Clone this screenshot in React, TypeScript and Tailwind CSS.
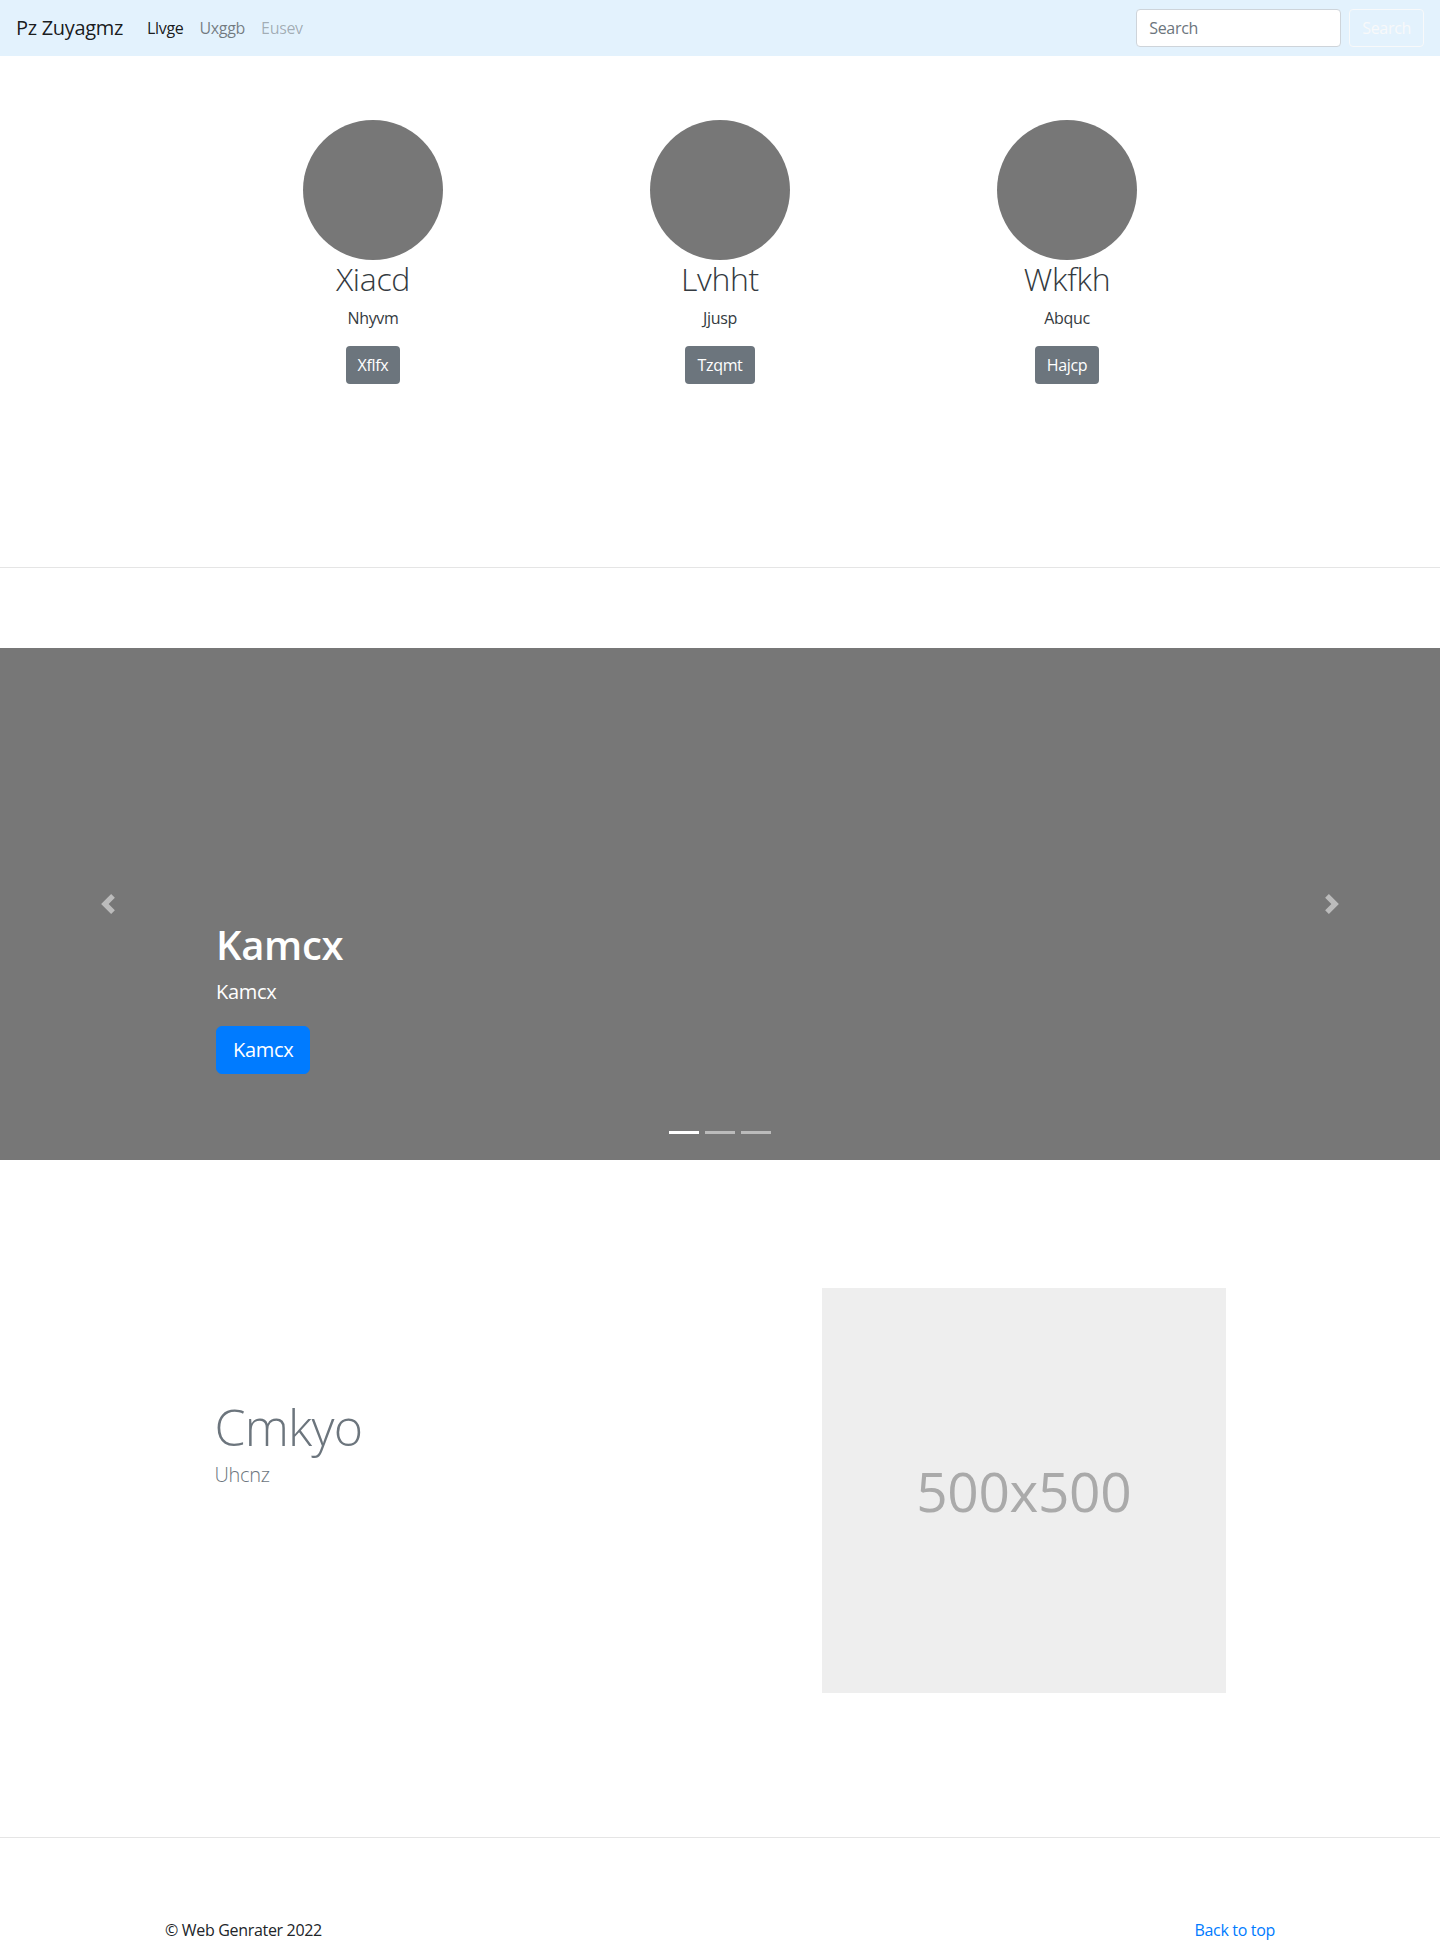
import React from "react";

const font = { fontFamily: '"Open Sans", "Noto Sans", Arial, sans-serif' };

function PrevIcon() {
  return (
    <svg width="20" height="20" viewBox="0 0 8 8" className="opacity-50">
      <path fill="#fff" d="M5.25 0l-4 4 4 4 1.5-1.5L4.25 4l2.5-2.5L5.25 0z" />
    </svg>
  );
}

function NextIcon() {
  return (
    <svg width="20" height="20" viewBox="0 0 8 8" className="opacity-50">
      <path fill="#fff" d="M2.75 0l-1.5 1.5L3.75 4l-2.5 2.5L2.75 8l4-4-4-4z" />
    </svg>
  );
}

const people = [
  { name: "Xiacd", sub: "Nhyvm", btn: "Xflfx" },
  { name: "Lvhht", sub: "Jjusp", btn: "Tzqmt" },
  { name: "Wkfkh", sub: "Abquc", btn: "Hajcp" },
];

export default function App() {
  return (
    <div className="bg-white text-[#212529] text-base leading-6 tracking-[-0.02em]" style={font}>
      <nav className="h-[56px] bg-[#e3f2fd] flex items-center px-4">
        <a className="text-[20px] leading-[30px] text-black/90 mr-4">Pz Zuyagmz</a>
        <ul className="flex">
          <li className="px-2 text-black/90">Llvge</li>
          <li className="px-2 text-black/50">Uxggb</li>
          <li className="px-2 text-black/30">Eusev</li>
        </ul>
        <form className="ml-auto flex items-center">
          <input
            placeholder="Search"
            className="w-[205px] h-[38px] bg-white border border-[#ced4da] rounded px-3 text-base text-[#495057] placeholder:text-[#6c757d] mr-2 outline-none"
          />
          <button
            type="button"
            className="h-[38px] px-3 border border-[#f8f9fa] rounded text-[#f8f9fa] text-base"
          >
            Search
          </button>
        </form>
      </nav>

      <section className="h-[511px] pt-16">
        <div className="w-[1041px] mx-auto grid grid-cols-3">
          {people.map((p) => (
            <div key={p.name} className="flex flex-col items-center px-[15px] text-center">
              <div className="w-[140px] h-[140px] rounded-full bg-[#777]" />
              <h2 className="text-[32px] leading-[1.2] font-[350] mb-2 text-[#343a40]">{p.name}</h2>
              <p className="mb-4 text-[#343a40]">{p.sub}</p>
              <button className="h-[38px] px-3 rounded bg-[#6c757d] text-white text-base">{p.btn}</button>
            </div>
          ))}
        </div>
      </section>

      <div className="border-t border-[#e5e5e5] h-[81px]" />

      <div className="relative h-[512px] bg-[#777] overflow-hidden">
        <div className="absolute left-0 top-0 bottom-0 w-[15%] flex items-center justify-center">
          <PrevIcon />
        </div>
        <div className="absolute right-0 top-0 bottom-0 w-[15%] flex items-center justify-center">
          <NextIcon />
        </div>
        <div className="absolute left-[15%] right-[15%] bottom-[86px] text-white text-left">
          <h1 className="text-[40px] leading-[1.2] font-semibold mb-2">Kamcx</h1>
          <p className="text-[20px] leading-[30px] mb-[19px]">Kamcx</p>
          <a className="inline-block h-[48px] px-4 rounded-md bg-[#007bff] text-white text-[20px] leading-[46px] border border-[#007bff]">
            Kamcx
          </a>
        </div>
        <ol className="absolute bottom-0 left-0 right-0 flex justify-center mb-[26px]">
          <li className="w-[30px] h-[3px] mx-[3px] bg-white" />
          <li className="w-[30px] h-[3px] mx-[3px] bg-white/50" />
          <li className="w-[30px] h-[3px] mx-[3px] bg-white/50" />
        </ol>
      </div>

      <section className="h-[677px] pt-[128px]">
        <div className="w-[1041px] mx-auto flex items-start">
          <div className="w-7/12 px-[15px] pt-[114px]">
            <h2 className="text-[50px] leading-none font-[350] tracking-[-0.05rem] text-[#6c757d] mb-2">Cmkyo</h2>
            <p className="text-[20px] leading-[30px] font-light text-[#6c757d]">Uhcnz</p>
          </div>
          <div className="w-5/12 px-[15px]">
            <div className="w-[404px] h-[405px] bg-[#eee] flex items-center justify-center">
              <span className="text-[55px] text-[#aaa] leading-none">500x500</span>
            </div>
          </div>
        </div>
      </section>

      <footer className="border-t border-[#e5e5e5] pt-20">
        <div className="w-[1140px] mx-auto px-[15px] flex justify-between h-[24px]">
          <p className="text-[#212529]">© Web Genrater 2022</p>
          <a className="text-[#007bff]">Back to top</a>
        </div>
      </footer>
    </div>
  );
}
